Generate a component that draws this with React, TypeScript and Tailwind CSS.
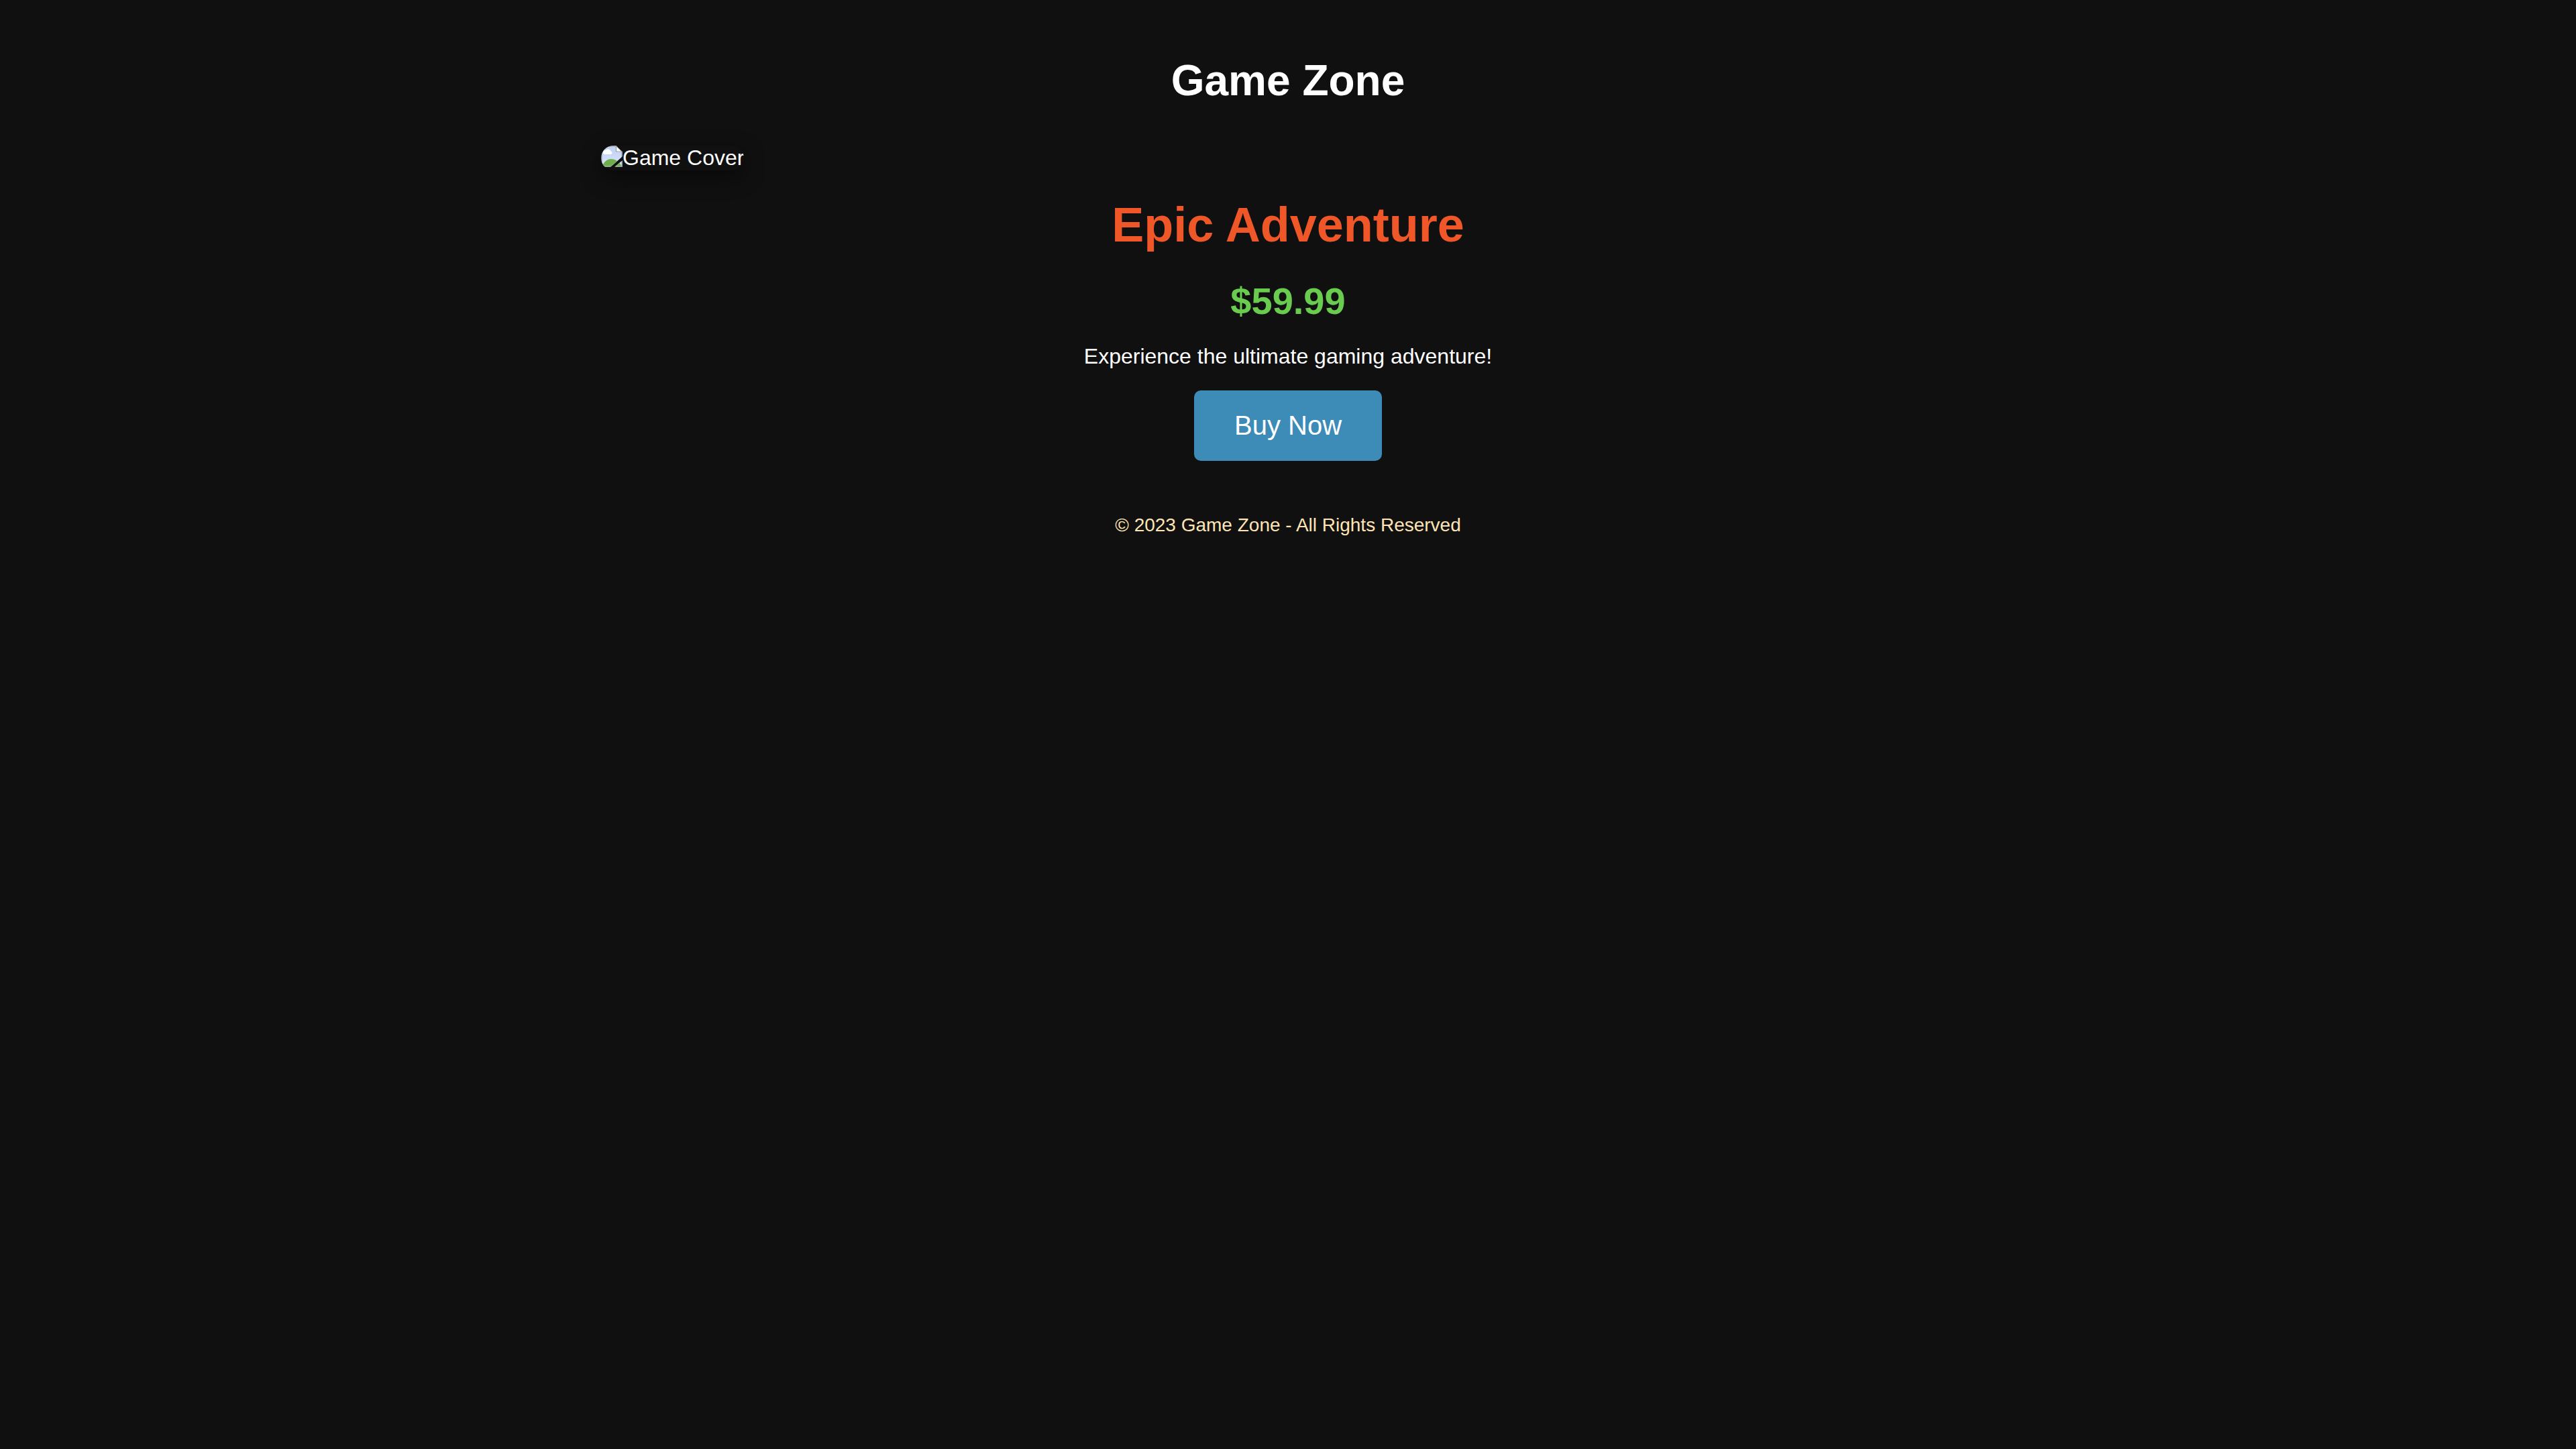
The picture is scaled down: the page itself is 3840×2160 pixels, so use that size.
function BrokenImageIcon() {
  return (
    <svg viewBox="0 0 32 32" className="h-8 w-8 shrink-0" aria-hidden="true">
      <defs>
        <linearGradient id="sky" x1="0" y1="0" x2="0" y2="1">
          <stop offset="0" stopColor="#bfd0f2" />
          <stop offset="1" stopColor="#dbe5fb" />
        </linearGradient>
        <clipPath id="page">
          <path d="M0 0H22L32 10V16L14 32H0Z M32 22V32H20Z" />
        </clipPath>
      </defs>
      <g clipPath="url(#page)">
        <rect width="32" height="32" fill="#999b9f" />
        <path d="M1.5 1.5H22L30.5 10V30.5H1.5Z" fill="url(#sky)" />
        <path d="M6 13a3 3 0 0 1 0-6h.6a4.6 4.6 0 0 1 8 1.4A2.4 2.4 0 0 1 15 13Z" fill="#fff" />
        <path d="M1.5 30.5C5 23 10 20 15 20C21 20 27 24 30.5 30.5Z" fill="#6fae4b" />
      </g>
      <path d="M22 0L32 9.5H22Z" fill="#fff" />
      <path d="M22.5 0V9H31.5" fill="none" stroke="#999b9f" strokeWidth="1.2" />
      <path d="M22 .5L31.5 9.5" fill="none" stroke="#999b9f" strokeWidth="1" />
    </svg>
  );
}

export default function App() {
  return (
    <div className="min-h-screen bg-[#101010] px-10 pt-[83px] pb-10 font-['Liberation_Sans',Arial,sans-serif] text-white">
      <div className="mx-auto max-w-[2048px]">
        <header className="text-center">
          <h1 className="text-[64px] leading-[74px] font-bold">Game Zone</h1>
        </header>
        <main className="mt-[60px] flex flex-col items-center text-center">
          <div
            role="img"
            aria-label="Game Cover"
            className="flex items-start self-start overflow-hidden rounded-[20px] text-[32px] leading-[37px] shadow-[0_10px_30px_rgba(0,0,0,0.5)]"
          >
            <BrokenImageIcon />
            <span>Game Cover</span>
          </div>
          <h2 className="mt-10 text-[72px] leading-[82px] font-bold text-[#ef5728]">Epic Adventure</h2>
          <p className="mt-10 text-[56px] leading-[65px] font-bold text-[#6acc4e]">$59.99</p>
          <p className="mt-8 text-[32px] leading-[37px]">Experience the ultimate gaming adventure!</p>
          <button
            type="button"
            className="mt-8 cursor-pointer rounded-[10px] bg-[#3d8bb7] px-[60px] py-[30px] text-[40px] leading-[45px]"
          >
            Buy Now
          </button>
        </main>
        <footer className="mt-20 text-center text-[28px] leading-8 text-[#ffe4b5]">
          © 2023 Game Zone - All Rights Reserved
        </footer>
      </div>
    </div>
  );
}
